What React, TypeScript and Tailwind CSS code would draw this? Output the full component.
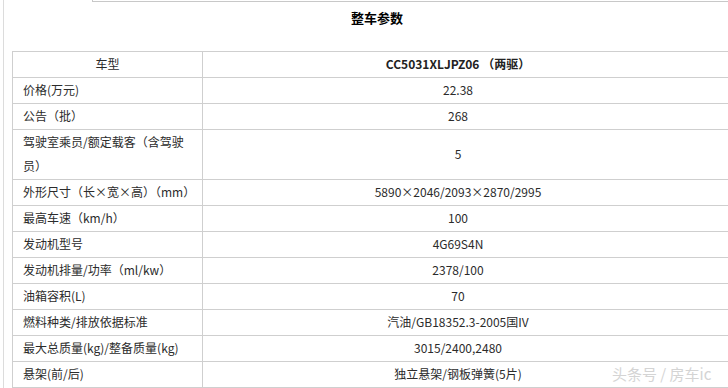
import React from "react";

const rows: [string, string][] = [
  ["价格(万元)", "22.38"],
  ["公告（批）", "268"],
  ["驾驶室乘员/额定载客（含驾驶员）", "5"],
  ["外形尺寸（长×宽×高）（mm）", "5890×2046/2093×2870/2995"],
  ["最高车速（km/h）", "100"],
  ["发动机型号", "4G69S4N"],
  ["发动机排量/功率（ml/kw）", "2378/100"],
  ["油箱容积(L)", "70"],
  ["燃料种类/排放依据标准", "汽油/GB18352.3-2005国IV"],
  ["最大总质量(kg)/整备质量(kg)", "3015/2400,2480"],
  ["悬架(前/后)", "独立悬架/钢板弹簧(5片)"],
];

export default function App() {
  return (
    <div
      className="relative h-[388px] w-[728px] overflow-hidden bg-white text-[#2b2b2b]"
      style={{ fontFamily: '"Noto Sans CJK SC", "Liberation Sans", sans-serif' }}
    >
      <div className="flex h-full">
        <div className="ml-[3px] w-px shrink-0 bg-[#dcdcdc]" />
        <div className="ml-[8px] w-[730px] shrink-0">
          <div className="ml-[80px] h-[2px] border-b border-l border-[#c8c8c8]" />
          <div className="flex h-[49px] items-center justify-center pb-[18px] text-[13px] font-bold text-black">
            整车参数
          </div>
          <table className="w-[730px] border-collapse text-[12px] leading-[24px]">
            <tbody>
              <tr>
                <td className="w-[190px] border border-[#cfcfcf] pb-px text-center">车型</td>
                <td className="border border-[#cfcfcf] pb-px pr-[28px] text-center font-bold text-[#222]">
                  CC5031XLJPZ06 （两驱）
                </td>
              </tr>
              {rows.map(([k, v]) => (
                <tr key={k}>
                  <td className="w-[190px] border border-[#cfcfcf] pb-px pl-[10px] pr-[12px] text-left">
                    {k}
                  </td>
                  <td className="border border-[#cfcfcf] pb-px pr-[28px] text-center">{v}</td>
                </tr>
              ))}
            </tbody>
          </table>
        </div>
      </div>
      <div
        className="absolute left-[612px] top-[364px] text-[15px] leading-[20px] text-[#d4d4d4]"
        style={{ textShadow: "0 0 1px #fff" }}
      >
        头条号 / 房车ic
      </div>
    </div>
  );
}
